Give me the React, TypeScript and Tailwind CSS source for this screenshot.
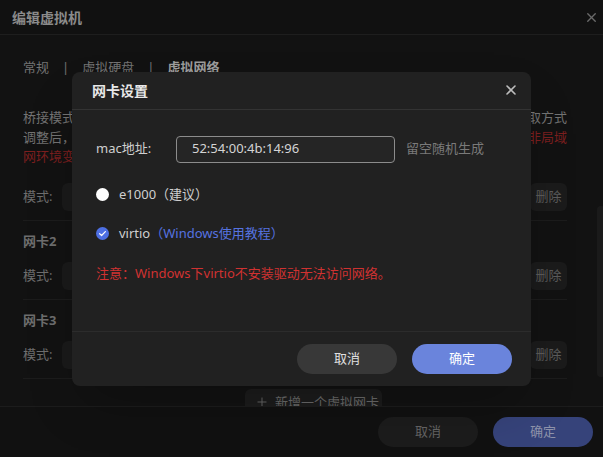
import { X, Plus } from "lucide-react";

const font = { fontFamily: '"Noto Sans", "Noto Sans CJK SC", sans-serif' };

function ModeRow() {
  return (
    <div className="flex items-center h-[28px]">
      <span className="w-[39px] text-[13px] text-[#6e6e6e]">模式:</span>
      <div className="flex-1 h-[28px] rounded-md bg-[#1a1a1a]" />
      <button className="ml-[10px] w-[37px] h-[28px] rounded-md bg-[#1b1b1b] text-[13px] text-[#5c5c5c]">删除</button>
    </div>
  );
}

function NicModal() {
  return (
    <div className="w-[459px] h-[314px] rounded-lg bg-[#212121] flex flex-col shadow-2xl">
      {/* header */}
      <div className="h-[38px] flex items-center justify-between pl-[20px] pr-[12px] border-b border-[#333333]">
        <span className="text-[14px] font-bold text-[#e8e8e8]">网卡设置</span>
        <X className="w-[16px] h-[16px] text-[#bdbdbd]" strokeWidth={2.4} />
      </div>

      {/* body */}
      <div className="flex-1 pl-[24px] flex flex-col">
        <div className="mt-[26px] flex items-center h-[27px]">
          <span className="w-[80px] text-[13px] text-[#cfcfcf]">mac地址:</span>
          <div className="w-[219px] h-[27px] rounded-[4px] border border-[#8c8c8c] bg-[#252525] flex items-center pl-[15px] text-[13px] text-[#d4d4d4]">
            52:54:00:4b:14:96
          </div>
          <span className="ml-[11px] text-[13px] text-[#7a7a7a]">留空随机生成</span>
        </div>

        <div className="mt-[22px] h-[20px] flex items-center">
          <span className="w-[13px] h-[13px] rounded-full bg-white" />
          <span className="ml-[10px] text-[13px] text-[#cfcfcf]">e1000（建议）</span>
        </div>

        <div className="mt-[19px] h-[20px] flex items-center">
          <span className="w-[13px] h-[13px] rounded-full bg-[#4d6fe3] flex items-center justify-center">
            <svg viewBox="0 0 12 12" className="w-[9px] h-[9px]">
              <path d="M2.2 6.3 L4.8 8.7 L9.8 3.4" fill="none" stroke="white" strokeWidth="1.6" strokeLinecap="round" strokeLinejoin="round" />
            </svg>
          </span>
          <span className="ml-[10px] text-[13px] text-[#cfcfcf]">virtio</span>
          <span className="text-[13px] text-[#5673e0]">（Windows使用教程）</span>
        </div>

        <div className="mt-[20px] h-[20px] flex items-center text-[13px] text-[#d03231]">
          注意：Windows下virtio不安装驱动无法访问网络。
        </div>
      </div>

      {/* footer */}
      <div className="h-[55px] border-t border-[#2c2c2c] flex items-center justify-end gap-[15px] pr-[19px]">
        <button className="w-[100px] h-[30px] rounded-full bg-[#383838] text-[13px] text-[#e0e0e0]">取消</button>
        <button className="w-[100px] h-[30px] rounded-full bg-[#6a84dc] text-[13px] text-white">确定</button>
      </div>
    </div>
  );
}

export default function App() {
  return (
    <div className="relative w-[603px] h-[457px] overflow-hidden bg-[#121212]" style={font}>
      <div className="flex flex-col h-full">
        {/* outer dialog header */}
        <div className="h-[35px] shrink-0 flex items-center justify-between pl-[12px] pr-[4px] border-b border-[#1e1e1e] bg-[#111111]">
          <span className="text-[14px] font-bold text-[#8a8a8a]">编辑虚拟机</span>
          <X className="w-[15px] h-[15px] text-[#6a6a6a]" strokeWidth={2.2} />
        </div>

        {/* outer dialog body */}
        <div className="flex-1 overflow-hidden pl-[23px] pr-[36px]">
          <div className="mt-[23px] h-[20px] flex items-center gap-[13px] text-[13px] text-[#727272]">
            <span>常规</span>
            <span>|</span>
            <span>虚拟硬盘</span>
            <span>|</span>
            <span className="font-bold text-[#9c9c9c]">虚拟网络</span>
          </div>

          <div className="mt-[30px] text-[13px] leading-[19.5px] text-[#737373]">
            <div className="flex justify-between">
              <span>桥接模式下</span>
              <span>获取方式</span>
            </div>
            <div className="flex justify-between">
              <span>调整后，</span>
              <span className="text-[#7c1f1f]">非局域</span>
            </div>
            <div className="text-[#7c1f1f]">网环境变更</div>
          </div>

          <div className="mt-[16px] pb-[9px] border-b border-[#1c1c1c]">
            <ModeRow />
          </div>

          <div className="mt-[11px] h-[20px] flex items-center text-[13px] font-bold text-[#6e6e6e]">网卡2</div>
          <div className="mt-[10px] pb-[9px] border-b border-[#1c1c1c]">
            <ModeRow />
          </div>

          <div className="mt-[11px] h-[20px] flex items-center text-[13px] font-bold text-[#6e6e6e]">网卡3</div>
          <div className="mt-[10px] pb-[9px] border-b border-[#1c1c1c]">
            <ModeRow />
          </div>

          <button className="mt-[10px] ml-[222px] w-[137px] h-[28px] rounded-md bg-[#1c1c1c] flex items-start pt-[4px] pl-[10px] gap-[6px] text-[13px] text-[#6a6a6a]">
            <Plus className="w-[14px] h-[14px] mt-[2px]" strokeWidth={1.6} />
            新增一个虚拟网卡
          </button>
        </div>

        {/* outer dialog footer */}
        <div className="h-[51px] shrink-0 border-t border-[#1c1c1c] bg-[#111111] flex items-center justify-end gap-[15px] pr-[10px]">
          <button className="w-[100px] h-[30px] rounded-full bg-[#1c1c1c] text-[13px] text-[#646464]">取消</button>
          <button className="w-[100px] h-[30px] rounded-full bg-[#36437a] text-[13px] text-[#8e93ab]">确定</button>
        </div>
      </div>

      {/* scrollbar */}
      <div className="absolute left-[597px] top-[206px] w-[8px] h-[171px] rounded-[4px] bg-[#1a1a1a]" />

      {/* modal */}
      <div className="absolute inset-0 flex items-center justify-center">
        <NicModal />
      </div>
    </div>
  );
}
